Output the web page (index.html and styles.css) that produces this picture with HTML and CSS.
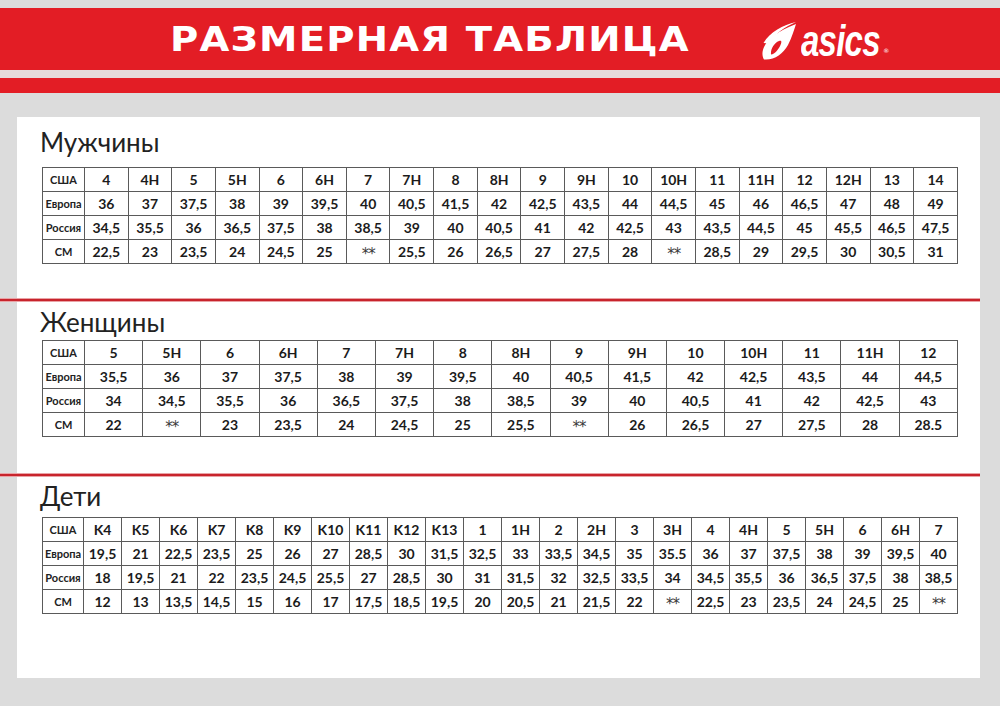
FILE: index.html
```html
<!DOCTYPE html>
<html lang="ru">
<head>
<meta charset="utf-8">
<title>Размерная таблица ASICS</title>
<link rel="stylesheet" href="styles.css">
</head>
<body>
<header class="top">
  <div class="banner">
    <h1 class="banner-title">РАЗМЕРНАЯ ТАБЛИЦА</h1>
    <div class="logo">
      <svg class="logo-mark" width="34" height="38" viewBox="0 0 34 38" aria-hidden="true">
        <path fill="#fff" fill-rule="evenodd" d="M2,37.5 C-2,31 2,21 11,14 C18,9 26,5 34,2 C32,8 30,15 26,23 C21,32 12,38.5 2,37.5 Z M9,32.5 C13,32 16.5,27.5 18.5,23 C20,19.5 19.5,18 17,19 C12,21 8.5,27 9,32.5 Z"/>
        <path fill="#fff" d="M1.5,21 C8,10 21,3 34,0 C23,5 13,11 7,21.5 Z"/>
      </svg>
      <span class="logo-text">asics</span><span class="logo-reg">®</span>
    </div>
  </div>
  <div class="sep"></div>
  <div class="stripe"></div>
</header>

<main class="panel">
  <h2 class="section-title">Мужчины</h2>
  <table class="sizes sizes-men">
    <tr><th>США</th><td>4</td><td>4H</td><td>5</td><td>5H</td><td>6</td><td>6H</td><td>7</td><td>7H</td><td>8</td><td>8H</td><td>9</td><td>9H</td><td>10</td><td>10H</td><td>11</td><td>11H</td><td>12</td><td>12H</td><td>13</td><td>14</td></tr>
    <tr><th>Европа</th><td>36</td><td>37</td><td>37,5</td><td>38</td><td>39</td><td>39,5</td><td>40</td><td>40,5</td><td>41,5</td><td>42</td><td>42,5</td><td>43,5</td><td>44</td><td>44,5</td><td>45</td><td>46</td><td>46,5</td><td>47</td><td>48</td><td>49</td></tr>
    <tr><th>Россия</th><td>34,5</td><td>35,5</td><td>36</td><td>36,5</td><td>37,5</td><td>38</td><td>38,5</td><td>39</td><td>40</td><td>40,5</td><td>41</td><td>42</td><td>42,5</td><td>43</td><td>43,5</td><td>44,5</td><td>45</td><td>45,5</td><td>46,5</td><td>47,5</td></tr>
    <tr><th>СМ</th><td>22,5</td><td>23</td><td>23,5</td><td>24</td><td>24,5</td><td>25</td><td class="na">**</td><td>25,5</td><td>26</td><td>26,5</td><td>27</td><td>27,5</td><td>28</td><td class="na">**</td><td>28,5</td><td>29</td><td>29,5</td><td>30</td><td>30,5</td><td>31</td></tr>
  </table>

  <div class="divider divider-1"></div>

  <h2 class="section-title section-title-women">Женщины</h2>
  <table class="sizes sizes-women">
    <tr><th>США</th><td>5</td><td>5H</td><td>6</td><td>6H</td><td>7</td><td>7H</td><td>8</td><td>8H</td><td>9</td><td>9H</td><td>10</td><td>10H</td><td>11</td><td>11H</td><td>12</td></tr>
    <tr><th>Европа</th><td>35,5</td><td>36</td><td>37</td><td>37,5</td><td>38</td><td>39</td><td>39,5</td><td>40</td><td>40,5</td><td>41,5</td><td>42</td><td>42,5</td><td>43,5</td><td>44</td><td>44,5</td></tr>
    <tr><th>Россия</th><td>34</td><td>34,5</td><td>35,5</td><td>36</td><td>36,5</td><td>37,5</td><td>38</td><td>38,5</td><td>39</td><td>40</td><td>40,5</td><td>41</td><td>42</td><td>42,5</td><td>43</td></tr>
    <tr><th>СМ</th><td>22</td><td class="na">**</td><td>23</td><td>23,5</td><td>24</td><td>24,5</td><td>25</td><td>25,5</td><td class="na">**</td><td>26</td><td>26,5</td><td>27</td><td>27,5</td><td>28</td><td>28.5</td></tr>
  </table>

  <div class="divider divider-2"></div>

  <h2 class="section-title section-title-kids">Дети</h2>
  <table class="sizes sizes-kids">
    <tr><th>США</th><td>K4</td><td>K5</td><td>K6</td><td>K7</td><td>K8</td><td>K9</td><td>K10</td><td>K11</td><td>K12</td><td>K13</td><td>1</td><td>1H</td><td>2</td><td>2H</td><td>3</td><td>3H</td><td>4</td><td>4H</td><td>5</td><td>5H</td><td>6</td><td>6H</td><td>7</td></tr>
    <tr><th>Европа</th><td>19,5</td><td>21</td><td>22,5</td><td>23,5</td><td>25</td><td>26</td><td>27</td><td>28,5</td><td>30</td><td>31,5</td><td>32,5</td><td>33</td><td>33,5</td><td>34,5</td><td>35</td><td>35.5</td><td>36</td><td>37</td><td>37,5</td><td>38</td><td>39</td><td>39,5</td><td>40</td></tr>
    <tr><th>Россия</th><td>18</td><td>19,5</td><td>21</td><td>22</td><td>23,5</td><td>24,5</td><td>25,5</td><td>27</td><td>28,5</td><td>30</td><td>31</td><td>31,5</td><td>32</td><td>32,5</td><td>33,5</td><td>34</td><td>34,5</td><td>35,5</td><td>36</td><td>36,5</td><td>37,5</td><td>38</td><td>38,5</td></tr>
    <tr><th>СМ</th><td>12</td><td>13</td><td>13,5</td><td>14,5</td><td>15</td><td>16</td><td>17</td><td>17,5</td><td>18,5</td><td>19,5</td><td>20</td><td>20,5</td><td>21</td><td>21,5</td><td>22</td><td class="na">**</td><td>22,5</td><td>23</td><td>23,5</td><td>24</td><td>24,5</td><td>25</td><td class="na">**</td></tr>
  </table>
</main>
</body>
</html>
```

FILE: styles.css
```css
html, body {
  margin: 0;
  padding: 0;
}

body {
  width: 1000px;
  height: 706px;
  overflow: hidden;
  background: #dcdcdc;
  font-family: Lato, "Open Sans", "DejaVu Sans", sans-serif;
  color: #1b1b1b;
}

/* ---------- header ---------- */
.top {
  padding-top: 8px;
}

.banner {
  height: 62px;
  background: #e31d25;
  display: flex;
  align-items: center;
  padding-left: 170px;
  box-sizing: border-box;
}

.banner-title {
  display: inline-block;
  margin: 0;
  font-family: "DejaVu Sans", "Liberation Sans", sans-serif;
  font-weight: bold;
  font-size: 33px;
  line-height: 33px;
  letter-spacing: 1px;
  color: #fff;
  white-space: nowrap;
  transform: scaleX(1.17);
  transform-origin: left center;
}

.logo {
  display: flex;
  align-items: flex-end;
  margin-left: 148px;
  height: 40px;
  padding-top: 4px;
}

.logo-mark {
  display: block;
  margin-bottom: 1px;
}

.logo-text {
  display: inline-block;
  font-family: "Liberation Sans", Arial, sans-serif;
  font-weight: bold;
  font-style: italic;
  font-size: 44px;
  line-height: 40px;
  color: #fff;
  transform: scaleX(0.75);
  transform-origin: left bottom;
  margin-left: 5px;
  letter-spacing: -1px;
  width: 82px;
}

.logo-reg {
  font-family: "DejaVu Sans", sans-serif;
  font-size: 6px;
  line-height: 10px;
  color: #fff;
  margin-bottom: 5px;
}

.sep {
  height: 8px;
  background: #e7dada;
}

.stripe {
  height: 15px;
  background: #e31d25;
}

/* ---------- panel ---------- */
.panel {
  display: block;
  margin: 24px 20px 0 17px;
  height: 561px;
  background: #fff;
  padding: 12px 42px 0 25px;
  box-sizing: border-box;
}

.section-title {
  margin: 0 0 0 -2px;
  font-family: Lato, "Open Sans", sans-serif;
  font-weight: normal;
  font-size: 26px;
  line-height: 26px;
  color: #222;
}

.section-title-women {
  margin-top: 7px;
}

.section-title-kids {
  margin-top: 6px;
}

.sizes {
  width: 916px;
  border-collapse: collapse;
  table-layout: fixed;
  border: 1px solid #3f3f3f;
}

.sizes-men {
  margin-top: 12px;
}

.sizes-women {
  margin-top: 5px;
}

.sizes-kids {
  margin-top: 8px;
}

.sizes th,
.sizes td {
  height: 23px;
  padding: 0;
  border: 1px solid #5a5a5a;
  text-align: center;
  vertical-align: middle;
  white-space: nowrap;
}

.sizes th {
  width: 41px;
  font-size: 11px;
  font-weight: bold;
  color: #222;
}

.sizes td {
  font-size: 14px;
  font-weight: bold;
  color: #1b1b1b;
}

.sizes-kids th {
  width: 40px;
}

.sizes td.na {
  font-family: "DejaVu Sans", sans-serif;
  font-weight: normal;
  color: #3a3a3a;
  font-size: 15px;
  letter-spacing: -1px;
  padding-top: 4px;
  box-sizing: border-box;
}

.divider {
  height: 4px;
  margin-left: -42px;
  margin-right: -42px;
  background: linear-gradient(#e9a3a6 0, #e9a3a6 1px, #c8242c 1px, #c8242c 3px, #e9a3a6 3px);
}

.divider-1 {
  margin-top: 34px;
}

.divider-2 {
  margin-top: 36px;
}
```
